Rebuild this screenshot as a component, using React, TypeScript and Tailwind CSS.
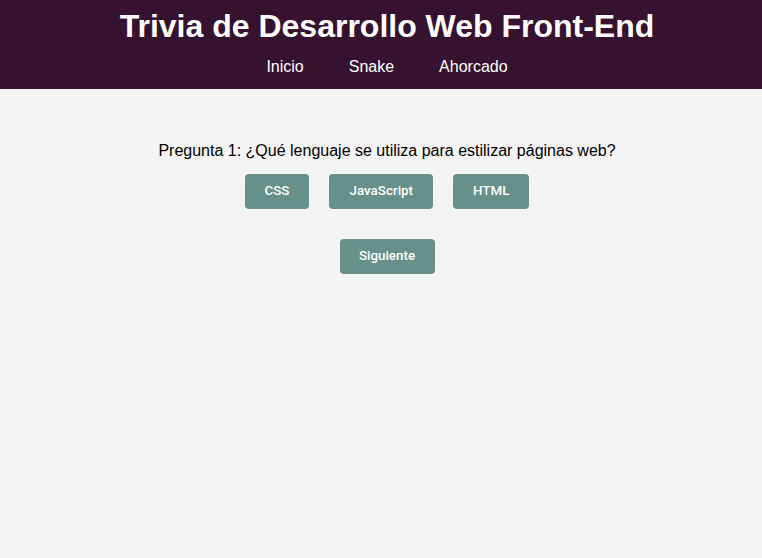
import React from "react";

const options = ["CSS", "JavaScript", "HTML"];

export default function App() {
  return (
    <div className="min-h-[558px] bg-[#f4f4f4] font-['Liberation_Sans',Arial,sans-serif] text-black">
      <header className="bg-[#361230] pb-[13px] pl-3 pt-[8px] text-center text-white">
        <h1 className="text-[32px] font-bold leading-[37px]">
          Trivia de Desarrollo Web Front-End
        </h1>
        <nav className="mt-[13px] flex justify-center gap-[45px] text-[16px] leading-[18px]">
          <a href="#">Inicio</a>
          <a href="#">Snake</a>
          <a href="#">Ahorcado</a>
        </nav>
      </header>

      <main className="pl-3 pt-[53px] text-center">
        <p className="text-[16px] leading-[18px]">
          Pregunta 1: ¿Qué lenguaje se utiliza para estilizar páginas web?
        </p>
        <div className="mt-[14px] flex justify-center gap-5">
          {options.map((o) => (
            <button
              key={o}
              className="h-[35px] rounded-[4px] bg-[#66908a] px-5 font-['Roboto',sans-serif] text-[13.4px] font-medium text-white"
            >
              {o}
            </button>
          ))}
        </div>
        <div className="mt-[30px] flex justify-center">
          <button className="h-[35px] w-[95px] rounded-[4px] bg-[#66908a] font-['Roboto',sans-serif] text-[13.4px] font-medium text-white">
            Siguiente
          </button>
        </div>
      </main>
    </div>
  );
}
